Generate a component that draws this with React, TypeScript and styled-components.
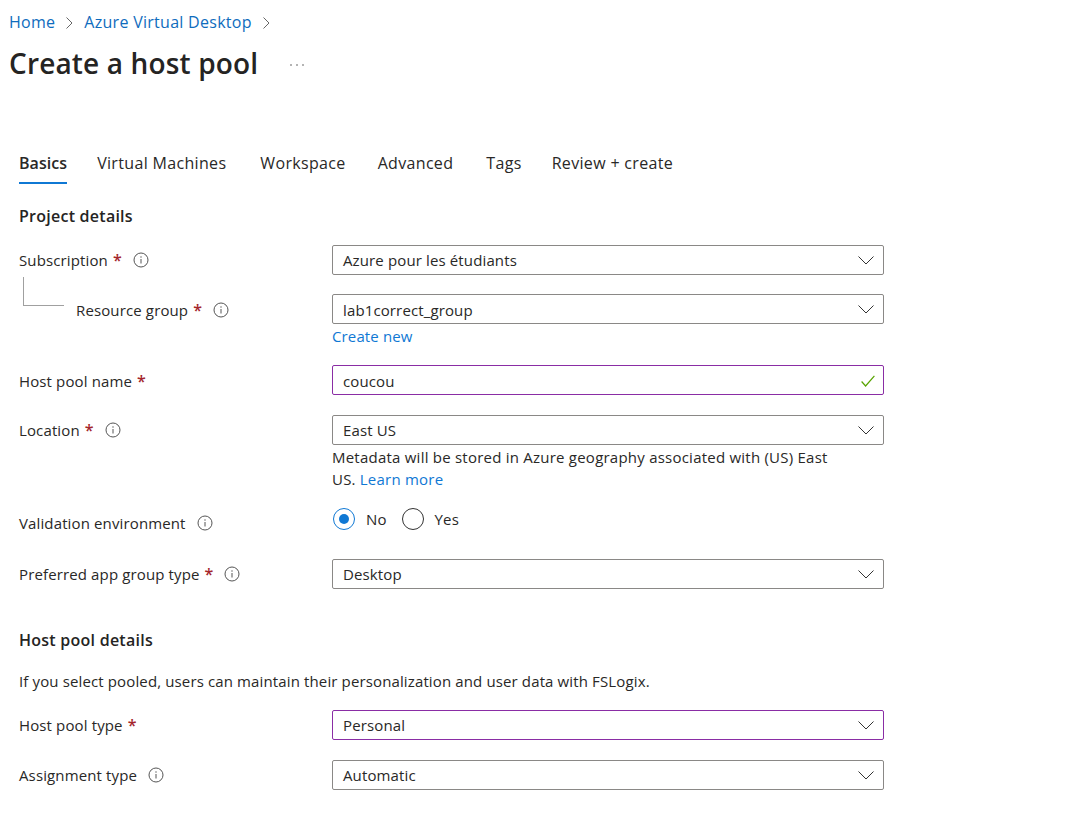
import React from "react";
import styled, { createGlobalStyle } from "styled-components";

const GlobalStyle = createGlobalStyle`
  html, body {
    margin: 0;
    background: #fff;
  }
  body {
    font-family: "Open Sans", "Noto Sans", "Liberation Sans", sans-serif;
    font-size: 15px;
    letter-spacing: 0.13px;
    color: #292827;
  }
`;

const Page = styled.div`
  width: 1092px;
  height: 837px;
  overflow: hidden;
  box-sizing: border-box;
  padding: 10px 0 0 9px;
`;

const Breadcrumb = styled.nav`
  display: flex;
  align-items: center;
  height: 24px;
  font-size: 16px;
  letter-spacing: 0.28px;
`;

const Crumb = styled.a`
  color: #0f6cbd;
`;

const CrumbArrow = styled.svg`
  margin: 1px 11px 0 11px;
`;

const TitleRow = styled.div`
  display: flex;
  align-items: center;
  height: 34px;
  margin-top: 12px;
`;

const Title = styled.h1`
  margin: 0;
  font-size: 28px;
  font-weight: 600;
  letter-spacing: 0.15px;
  color: #252423;
`;

const More = styled.svg`
  margin: 4px 0 0 32px;
`;

const Body = styled.div`
  padding-left: 10px;
  width: 875px;
`;

const Tabs = styled.div`
  display: flex;
  margin-top: 64px;
  height: 40px;
`;

const Tab = styled.div<{ $active?: boolean; $gap: number }>`
  height: 38px;
  line-height: 38px;
  margin-right: ${(p) => p.$gap}px;
  font-size: 16px;
  letter-spacing: ${(p) => (p.$active ? "0.05px" : "0.33px")};
  font-weight: ${(p) => (p.$active ? 600 : 400)};
  border-bottom: 2px solid ${(p) => (p.$active ? "#0f78d4" : "transparent")};
`;

const SectionTitle = styled.h2<{ $top: number }>`
  margin: ${(p) => p.$top}px 0 0;
  height: 24px;
  line-height: 24px;
  font-size: 16px;
  font-weight: 600;
  letter-spacing: 0.25px;
  color: #252423;
`;

const Row = styled.div<{ $top: number }>`
  display: grid;
  grid-template-columns: 313px 552px;
  align-items: start;
  margin-top: ${(p) => p.$top}px;
`;

const Label = styled.div<{ $indent?: boolean; $drop?: number }>`
  display: flex;
  align-items: center;
  height: 30px;
  margin-top: ${(p) => p.$drop ?? 0}px;
  padding-left: ${(p) => (p.$indent ? "57px" : "0")};
  position: relative;
`;

const Elbow = styled.span`
  position: absolute;
  left: 4px;
  top: -18px;
  width: 40px;
  height: 28px;
  border-left: 1px solid #a0a0a0;
  border-bottom: 1px solid #a0a0a0;
`;

const Star = styled.span`
  color: #a4262c;
  margin-left: 5px;
  font-size: 16px;
  font-weight: 600;
`;

const InfoIcon = styled.svg`
  width: 16px;
  height: 16px;
  margin-left: 11px;
  flex: none;
`;

const Control = styled.div<{ $accent?: boolean; $low?: boolean }>`
  box-sizing: border-box;
  height: 30px;
  display: flex;
  align-items: center;
  justify-content: space-between;
  padding: ${(p) => (p.$low ? "1px" : "0")} 9px 0 10px;
  border: 1px solid ${(p) => (p.$accent ? "#8a2da5" : "#8a8886")};
  border-radius: 2px;
`;

const Link = styled.a`
  color: #0f78d4;
`;

const CreateLink = styled(Link)`
  display: block;
  height: 25px;
  line-height: 25px;
`;

const Help = styled.div`
  margin-top: 1px;
  line-height: 22px;
  letter-spacing: 0.23px;
`;

const HelpLine = styled.div`
  display: flex;
  gap: 4px;
`;

const RadioGroup = styled.div`
  display: flex;
  align-items: center;
  height: 30px;
  margin-top: 1px;
`;

const RadioCircle = styled.span<{ $on?: boolean }>`
  box-sizing: border-box;
  width: 22px;
  height: 22px;
  margin-left: 1px;
  margin-right: 11px;
  border-radius: 50%;
  border: 1px solid ${(p) => (p.$on ? "#0f78d4" : "#333")};
  display: flex;
  align-items: center;
  justify-content: center;
  &::after {
    content: "";
    width: 10px;
    height: 10px;
    border-radius: 50%;
    background: ${(p) => (p.$on ? "#0f78d4" : "transparent")};
  }
`;

const RadioText = styled.span`
  margin-right: 14px;
`;

const Note = styled.p`
  margin: 18px 0 0;
  height: 22px;
  line-height: 22px;
`;

const CheckMark = styled.svg`
  margin-right: -1px;
`;

const Info = () => (
  <InfoIcon viewBox="0 0 16 16" fill="none">
    <circle cx="8" cy="8" r="7" stroke="#555" strokeWidth="1" />
    <path d="M8 7v4.5" stroke="#555" strokeWidth="1" />
    <circle cx="8" cy="5" r="0.7" fill="#555" />
  </InfoIcon>
);

const Chevron = () => (
  <svg width="16" height="9" viewBox="0 0 16 9" fill="none">
    <path d="M0.5 0.5 8 8 15.5 0.5" stroke="#333" strokeWidth="1" />
  </svg>
);

const Check = () => (
  <CheckMark width="14" height="12" viewBox="0 0 14 12" fill="none">
    <path d="M0.6 6.5 4.6 11 13.4 0.8" stroke="#57a300" strokeWidth="1.2" />
  </CheckMark>
);

const Select = ({ value, accent, low }: { value: string; accent?: boolean; low?: boolean }) => (
  <Control $accent={accent} $low={low}>
    {value}
    <Chevron />
  </Control>
);

const Arrow = () => (
  <CrumbArrow width="7" height="12" viewBox="0 0 7 12" fill="none">
    <path d="M.5.5 6 6 .5 11.5" stroke="#666" />
  </CrumbArrow>
);

export default function App() {
  return (
    <Page>
      <GlobalStyle />
      <Breadcrumb>
        <Crumb>Home</Crumb>
        <Arrow />
        <Crumb>Azure Virtual Desktop</Crumb>
        <Arrow />
      </Breadcrumb>
      <TitleRow>
        <Title>Create a host pool</Title>
        <More width="14" height="2" viewBox="0 0 14 2">
          <circle cx="1" cy="1" r="0.8" fill="#555" />
          <circle cx="7" cy="1" r="0.8" fill="#555" />
          <circle cx="13" cy="1" r="0.8" fill="#555" />
        </More>
      </TitleRow>
      <Body>
        <Tabs>
          <Tab $active $gap={30}>Basics</Tab>
          <Tab $gap={34}>Virtual Machines</Tab>
          <Tab $gap={32}>Workspace</Tab>
          <Tab $gap={33}>Advanced</Tab>
          <Tab $gap={30}>Tags</Tab>
          <Tab $gap={0}>Review + create</Tab>
        </Tabs>
        <SectionTitle $top={20}>Project details</SectionTitle>
        <Row $top={17}>
          <Label>
            Subscription<Star>*</Star>
            <Info />
          </Label>
          <Select value="Azure pour les étudiants" />
        </Row>
        <Row $top={19}>
          <Label $indent $drop={1}>
            <Elbow />
            Resource group<Star>*</Star>
            <Info />
          </Label>
          <div>
            <Select value="lab1correct_group" low />
            <CreateLink>Create new</CreateLink>
          </div>
        </Row>
        <Row $top={16}>
          <Label $drop={1}>
            Host pool name<Star>*</Star>
          </Label>
          <Control $accent $low>
            coucou
            <Check />
          </Control>
        </Row>
        <Row $top={19}>
          <Label>
            Location<Star>*</Star>
            <Info />
          </Label>
          <div>
            <Select value="East US" />
            <Help>
              <div>Metadata will be stored in Azure geography associated with (US) East</div>
              <HelpLine>
                <span>US.</span>
                <Link>Learn more</Link>
              </HelpLine>
            </Help>
          </div>
        </Row>
        <Row $top={13}>
          <Label $drop={5}>
            Validation environment
            <Info />
          </Label>
          <RadioGroup>
            <RadioCircle $on />
            <RadioText>No</RadioText>
            <RadioCircle />
            <RadioText>Yes</RadioText>
          </RadioGroup>
        </Row>
        <Row $top={21}>
          <Label>
            Preferred app group type<Star>*</Star>
            <Info />
          </Label>
          <Select value="Desktop" />
        </Row>
        <SectionTitle $top={39}>Host pool details</SectionTitle>
        <Note>If you select pooled, users can maintain their personalization and user data with FSLogix.</Note>
        <Row $top={18}>
          <Label>
            Host pool type<Star>*</Star>
          </Label>
          <Select value="Personal" accent />
        </Row>
        <Row $top={20}>
          <Label>
            Assignment type
            <Info />
          </Label>
          <Select value="Automatic" />
        </Row>
      </Body>
    </Page>
  );
}
